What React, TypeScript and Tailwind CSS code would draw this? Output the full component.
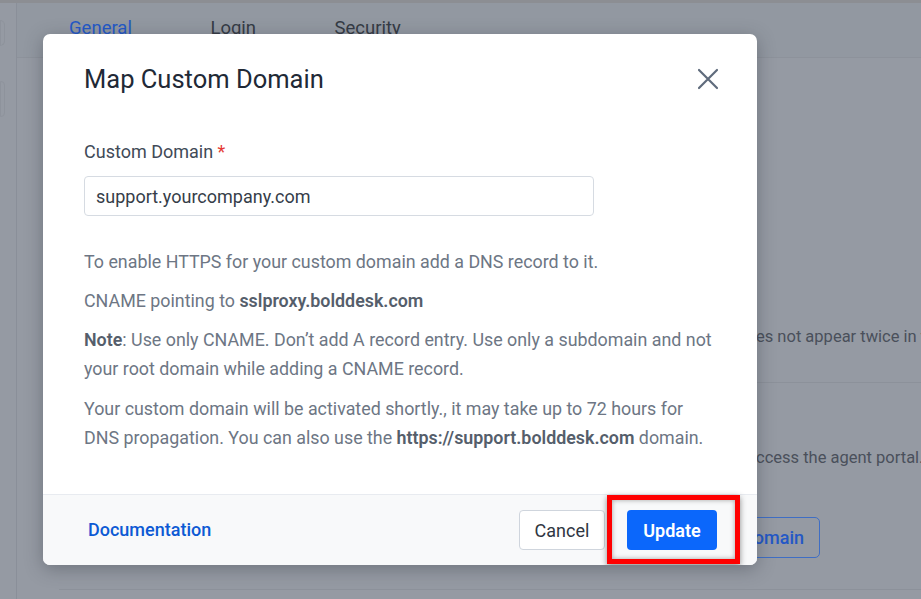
import React from "react";

export default function App() {
  return (
    <div
      className="relative w-[921px] h-[599px] overflow-hidden bg-[#959aa3]"
      style={{ fontFamily: "Roboto, 'Liberation Sans', sans-serif" }}
    >
      {/* background app */}
      <div className="flex flex-col h-full">
        <div className="h-[3px] bg-[#8c8e93]" />
        <div className="flex flex-1 min-w-0">
          <div className="w-[17px] shrink-0 border-r border-[#8a8f99] flex flex-col gap-[35px] pt-[17px]">
            <div className="w-[5px] h-[26px] border border-[#8e939c] rounded-r-full" />
            <div className="w-[5px] h-[36px] border border-[#8e939c] rounded-r-[4px]" />
          </div>
          <div className="flex-1 min-w-0 overflow-hidden flex flex-col">
            <div className="h-[55px] border-b border-[#8d929b] bg-[#9298a1] flex items-end pl-[52px] pb-[14px] gap-[78.5px] text-[18.5px]">
              <span className="text-[#2458c6]">General</span>
              <span className="text-[#353b45]">Login</span>
              <span className="text-[#353b45]">Security</span>
            </div>
            <div className="flex-1 text-[16.5px] text-[#4a505b]">
              <div className="pt-[267px] pl-[739px] whitespace-nowrap">
                es not appear twice in the URL.
              </div>
              <div className="mt-[32px] border-t border-[#8c919a] ml-[42px]" />
              <div className="pt-[63px] pl-[739px] whitespace-nowrap">
                ccess the agent portal.
              </div>
              <div className="mt-[46px] ml-[652px] w-[151px] h-[41px] border border-[#3f6ec4] rounded-[5px] flex items-center justify-end pr-[15px] text-[18px] text-[#2458c6] font-medium whitespace-nowrap overflow-hidden">
                Custom Domain
              </div>
              <div className="mt-[31px] border-t border-[#8c919a] ml-[42px]" />
            </div>
          </div>
        </div>
      </div>

      {/* dialog */}
      <div className="absolute left-[43px] top-[34px] w-[714px] h-[531px] bg-white rounded-[7px] shadow-[0_4px_18px_rgba(40,45,55,0.35)] flex flex-col overflow-hidden">
        <div className="flex items-start justify-between pl-[41px] pr-[38px] pt-[29px]">
          <h2 className="text-[25.5px] leading-[32px] text-[#212936] font-normal">Map Custom Domain</h2>
          <button className="mt-[5px] w-[22px] h-[22px] flex items-center justify-center">
            <svg width="22" height="22" viewBox="0 0 22 22" fill="none">
              <path d="M2 2L20 20M20 2L2 20" stroke="#5f6b7c" strokeWidth="2.2" strokeLinecap="round" />
            </svg>
          </button>
        </div>
        <div className="flex-1 pl-[41px] pr-[37px] pt-[45px]">
          <label className="block text-[18px] leading-[24px] text-[#414a57]">
            Custom Domain <span className="text-[#e53935]">*</span>
          </label>
          <div className="mt-[12px] w-[510px] h-[40px] border border-[#d6dbe2] rounded-[4px] flex items-center px-[11px] text-[18px] text-[#353d49]">
            support.yourcompany.com
          </div>
          <div className="mt-[31px] text-[17.85px] leading-[29px] text-[#6d7684] flex flex-col gap-[10px]">
            <p>To enable HTTPS for your custom domain add a DNS record to it.</p>
            <p>
              CNAME pointing to <span className="font-semibold text-[#555e6b]">sslproxy.bolddesk.com</span>
            </p>
            <p>
              <span className="font-semibold text-[#555e6b]">Note</span>: Use only CNAME. Don’t add A record entry. Use only a subdomain and not your root domain while adding a CNAME record.
            </p>
            <p className="pt-[1px]">
              Your custom domain will be activated shortly., it may take up to 72 hours for DNS propagation. You can also use the{" "}
              <span className="font-semibold text-[#555e6b]">https://support.bolddesk.com</span> domain.
            </p>
          </div>
        </div>
        <div className="relative h-[71px] border-t border-[#e8ebf0] bg-[#f8f9fa] flex items-center justify-between pl-[45px] pr-[40px]">
          <a className="text-[18px] font-medium text-[#0d5ad4] -mt-[2px]">Documentation</a>
          <div className="flex items-center gap-[22px]">
            <button className="w-[86px] h-[40px] border border-[#cfd5dd] rounded-[4px] bg-white text-[18px] text-[#2f3642]">
              Cancel
            </button>
            <button className="w-[90px] h-[40px] rounded-[4px] bg-[#0b67fb] text-[18px] font-semibold text-white">
              Update
            </button>
          </div>
          <div className="absolute left-[564px] top-[0px] w-[133px] h-[69px] border-[5px] border-[#ff0000] shadow-[0_2px_6px_rgba(0,0,0,0.45),inset_0_0_5px_rgba(0,0,0,0.35)] pointer-events-none" />
        </div>
      </div>
    </div>
  );
}
